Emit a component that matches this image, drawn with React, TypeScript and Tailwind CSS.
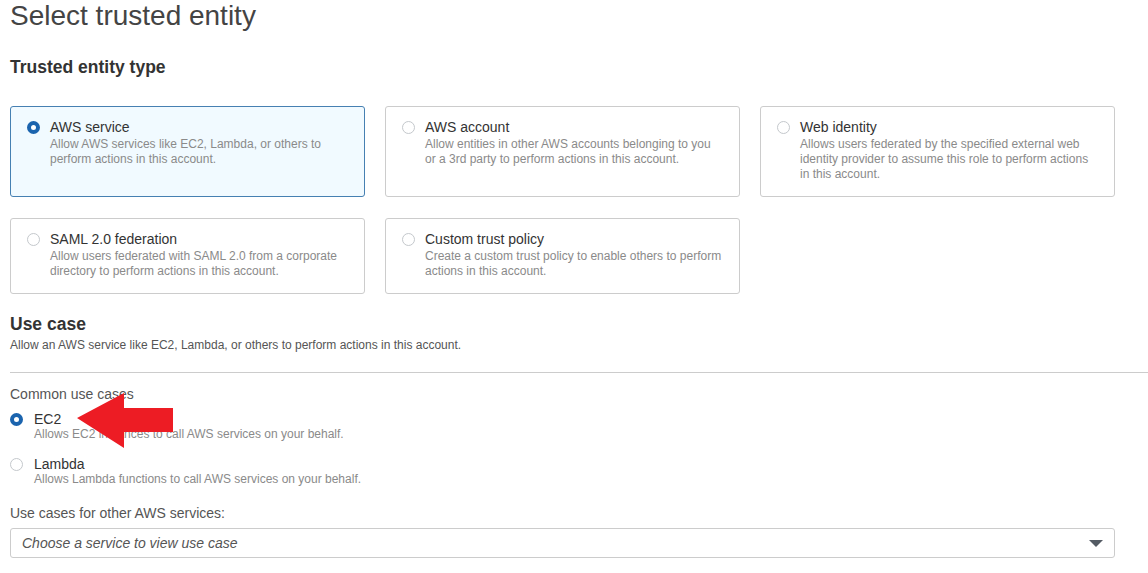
import React from "react";

type Tile = {
  title: string;
  desc: string;
  selected?: boolean;
};

const tiles: Tile[] = [
  {
    title: "AWS service",
    desc: "Allow AWS services like EC2, Lambda, or others to perform actions in this account.",
    selected: true,
  },
  {
    title: "AWS account",
    desc: "Allow entities in other AWS accounts belonging to you or a 3rd party to perform actions in this account.",
  },
  {
    title: "Web identity",
    desc: "Allows users federated by the specified external web identity provider to assume this role to perform actions in this account.",
  },
  {
    title: "SAML 2.0 federation",
    desc: "Allow users federated with SAML 2.0 from a corporate directory to perform actions in this account.",
  },
  {
    title: "Custom trust policy",
    desc: "Create a custom trust policy to enable others to perform actions in this account.",
  },
];

const useCases = [
  { title: "EC2", desc: "Allows EC2 instances to call AWS services on your behalf.", selected: true },
  { title: "Lambda", desc: "Allows Lambda functions to call AWS services on your behalf.", selected: false },
];

function Radio({ checked }: { checked?: boolean }) {
  return checked ? (
    <span className="block w-[13px] h-[13px] rounded-full border-[4px] border-[#1b64ae] bg-white shrink-0" />
  ) : (
    <span className="block w-[13px] h-[13px] rounded-full border border-[#c4c8cc] bg-white shrink-0" />
  );
}

function TileCard({ tile }: { tile: Tile }) {
  return (
    <div
      className={`flex items-start pl-[16px] pt-[10px] pb-[14px] rounded-[3px] border ${
        tile.selected ? "border-[#4680b2] bg-[#f1faff]" : "border-[#cccccc] bg-white"
      }`}
    >
      <div className="pt-[4px]">
        <Radio checked={tile.selected} />
      </div>
      <div className="ml-[10px] w-[297px]">
        <div className="text-[14px] leading-[20px] text-[#333333]">{tile.title}</div>
        <div className="text-[12px] leading-[15px] text-[#8a8a8a]">{tile.desc}</div>
      </div>
    </div>
  );
}

export default function App() {
  return (
    <div
      className="relative min-h-screen bg-white pl-[10px] text-[#333333]"
      style={{ fontFamily: '"Liberation Sans", Arial, sans-serif' }}
    >
      <h1 className="text-[28px] leading-[32px] text-[#444444]">Select trusted entity</h1>

      <h2 className="mt-[24px] text-[17.5px] leading-[22px] font-bold text-[#333333]">
        Trusted entity type
      </h2>

      <div className="mt-[28px] grid grid-cols-[repeat(3,355px)] gap-x-[20px] gap-y-[21px]">
        {tiles.map((t) => (
          <TileCard key={t.title} tile={t} />
        ))}
      </div>

      {/* Use case */}
      <h2 className="mt-[19px] text-[17.5px] leading-[22px] font-bold text-[#333333]">Use case</h2>
      <p className="mt-[2px] text-[12px] leading-[16px] text-[#555555]">
        Allow an AWS service like EC2, Lambda, or others to perform actions in this account.
      </p>

      <div className="mt-[19px] h-px bg-[#cccccc]" />

      <div className="mt-[12px] text-[14px] leading-[18px] text-[#555555]">Common use cases</div>

      <div className="mt-[8px] flex flex-col gap-[14px]">
        {useCases.map((u) => (
          <div key={u.title} className="flex items-start">
            <div className="pt-[2px]">
              <Radio checked={u.selected} />
            </div>
            <div className="ml-[11px]">
              <div className="text-[14px] leading-[16px] text-[#333333]">{u.title}</div>
              <div className="text-[12px] leading-[15px] text-[#8a8a8a]">{u.desc}</div>
            </div>
          </div>
        ))}
      </div>

      <div className="mt-[17px] text-[14px] leading-[18px] text-[#555555]">
        Use cases for other AWS services:
      </div>
      <div className="mt-[6px] w-[1105px] h-[30px] flex items-center justify-between rounded-[3px] border border-[#cccccc] bg-white pl-[11px] pr-[11px]">
        <span className="text-[14px] leading-[18px] italic text-[#555555]">
          Choose a service to view use case
        </span>
        <svg width="14" height="7" viewBox="0 0 14 7">
          <polygon points="0,0 14,0 7,7" fill="#545b64" />
        </svg>
      </div>

      {/* red annotation arrow */}
      <svg
        className="absolute left-[77px] top-[393px]"
        width="96"
        height="55"
        viewBox="0 0 96 55"
      >
        <polygon points="0,25 47,0 47,15 96,15 96,39 47,39 47,55" fill="#ed1c24" />
      </svg>
    </div>
  );
}
